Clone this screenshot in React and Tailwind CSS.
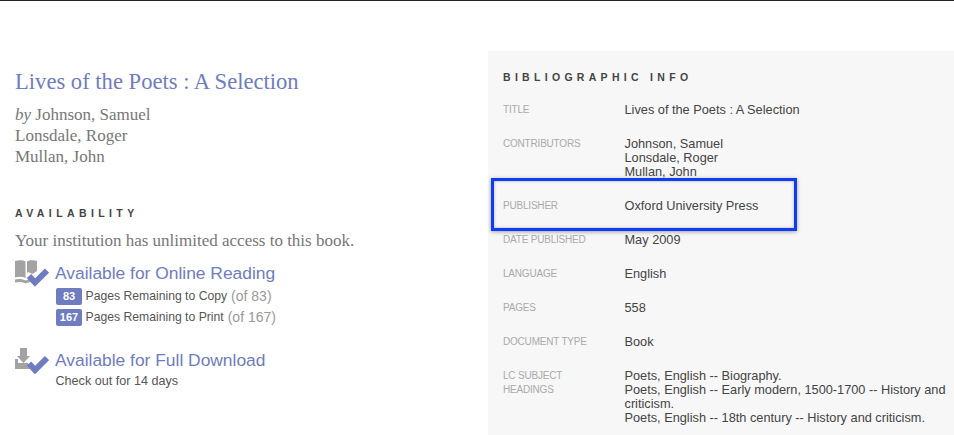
const rows = [
  { label: ['Title'], value: ['Lives of the Poets : A Selection'] },
  { label: ['Contributors'], value: ['Johnson, Samuel', 'Lonsdale, Roger', 'Mullan, John'] },
  { label: ['Publisher'], value: ['Oxford University Press'] },
  { label: ['Date Published'], value: ['May 2009'] },
  { label: ['Language'], value: ['English'] },
  { label: ['Pages'], value: ['558'] },
  { label: ['Document Type'], value: ['Book'] },
  {
    label: ['LC Subject', 'Headings'],
    value: [
      'Poets, English -- Biography.',
      'Poets, English -- Early modern, 1500-1700 -- History and criticism.',
      'Poets, English -- 18th century -- History and criticism.',
    ],
  },
];

const BookCheck = () => (
  <svg width="34" height="28" viewBox="0 -1 34 28" className="shrink-0">
    <path d="M0 1C4 0 8 0 10.5 1.5V18C7.5 16.5 4 16.5 0 17.5Z" fill="#a3a3a3" />
    <path d="M12 1.5C14.5 0 19 0 22 1V11L17.5 14L13 12L12 13Z" fill="#a3a3a3" />
    <path d="M0 19.5C4 18.5 8 19 11 20.5C12 20 13 19.5 14 19.5L16.5 22C14.5 22 13 22.5 11 23.5C8 22 4 21.5 0 22.5Z" fill="#a3a3a3" />
    <path d="M14 16L20 22.5L32 10.5" fill="none" stroke="#6f7cc0" strokeWidth="6" />
  </svg>
);

const DownloadCheck = () => (
  <svg width="34" height="28" viewBox="0 -1 34 28" className="shrink-0">
    <path d="M5 1H12V9H15L8.5 16L2 9H5Z" fill="#a3a3a3" />
    <path d="M0 12H3V16H13L17 22H0Z" fill="#a3a3a3" />
    <path d="M14 16.5L20 23L32 11" fill="none" stroke="#6f7cc0" strokeWidth="6" />
  </svg>
);

const Quota = ({ count, text, total }) => (
  <div className="flex items-center h-[21px]">
    <span className="w-[26px] h-[17px] mr-[3.5px] rounded-[2px] bg-[#6f7cc0] text-white text-[11px] font-bold leading-[17px] text-center">
      {count}
    </span>
    <span className="text-[12.2px] text-[#555]">{text}</span>
    <span className="ml-[4px] text-[14px] text-[#999]">{total}</span>
  </div>
);

export default function App() {
  return (
    <div className="relative h-[435px] w-[954px] overflow-hidden bg-white border-t border-[#222] font-['Liberation_Sans',Arial,sans-serif]">
      <div className="flex pt-[50px]">
        {/* Left column */}
        <div className="w-[488px] pl-[15px] pt-[18px] shrink-0">
          <h1 className="font-['Liberation_Serif',serif] text-[22.6px] leading-[26px] text-[#6f7cc0]">
            Lives of the Poets : A Selection
          </h1>
          <div className="mt-[9px] font-['Liberation_Serif',serif] text-[17px] leading-[21px] text-[#777]">
            <div><em>by</em> Johnson, Samuel</div>
            <div>Lonsdale, Roger</div>
            <div>Mullan, John</div>
          </div>

          <h2 className="mt-[39px] text-[10.5px] leading-[14px] font-bold tracking-[4.4px] text-[#444]">AVAILABILITY</h2>
          <p className="mt-[11px] font-['Liberation_Serif',serif] text-[17px] leading-[20px] text-[#777]">
            Your institution has unlimited access to this book.
          </p>

          <div className="mt-[8px] flex items-center gap-[6px] h-[28px]">
            <BookCheck />
            <span className="text-[17.4px] text-[#6f7cc0]">Available for Online Reading</span>
          </div>
          <div className="-mt-[1px] pl-[41px]">
            <Quota count="83" text="Pages Remaining to Copy" total="(of 83)" />
            <Quota count="167" text="Pages Remaining to Print" total="(of 167)" />
          </div>

          <div className="mt-[18px] flex items-center gap-[6px] h-[28px]">
            <DownloadCheck />
            <span className="text-[17.4px] text-[#6f7cc0]">Available for Full Download</span>
          </div>
          <div className="pl-[40.5px] text-[12.6px] leading-[14px] text-[#555]">Check out for 14 days</div>
        </div>

        {/* Right panel */}
        <div className="flex-1 h-[390px] bg-[#f7f7f7] pl-[15px] pr-[6px] pt-[19px]">
          <h2 className="text-[10.5px] leading-[14px] font-bold tracking-[4.3px] text-[#444]">BIBLIOGRAPHIC INFO</h2>
          <div className="mt-[19px] flex flex-col gap-[20px]">
            {rows.map((row) => (
              <div key={row.label[0]} className="flex">
                <div className="w-[121.5px] shrink-0 text-[10px] tracking-[-0.2px] leading-[14px] uppercase text-[#aaa]">
                  {row.label.map((line) => <div key={line}>{line}</div>)}
                </div>
                <div className="text-[12.75px] leading-[14px] text-[#444]">
                  {row.value.map((line) => <div key={line}>{line}</div>)}
                </div>
              </div>
            ))}
          </div>
        </div>
      </div>

      {/* Highlight box drawn over the panel */}
      <div className="absolute left-[491px] top-[177px] w-[306px] h-[53px] border-[3px] border-[#0f3cf5] shadow-[0_1px_4px_rgba(0,0,0,0.35),inset_0_0_3px_rgba(0,0,0,0.3)]" />
    </div>
  );
}
